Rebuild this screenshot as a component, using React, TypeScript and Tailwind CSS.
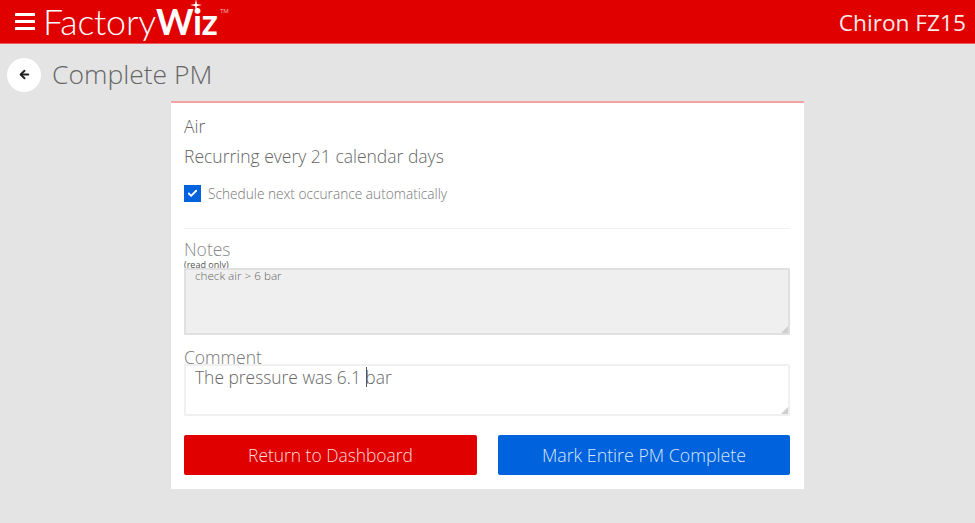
import { ArrowLeft, Check } from 'lucide-react';

const sans = "font-['Open_Sans','Liberation_Sans',sans-serif]";

function MenuIcon() {
  return (
    <svg width="20" height="17" viewBox="0 0 20 17" className="shrink-0">
      <rect x="0" y="0" width="20" height="3" rx="0.5" fill="#fff" />
      <rect x="0" y="7" width="20" height="3" rx="0.5" fill="#fff" />
      <rect x="0" y="14" width="20" height="3" rx="0.5" fill="#fff" />
    </svg>
  );
}

function ResizeGrip() {
  return (
    <svg width="7" height="7" viewBox="0 0 7 7" className="absolute right-[2px] bottom-[2px]">
      <path d="M7 0 L7 7 L0 7 Z" fill="#cfcfcf" />
    </svg>
  );
}

function Logo() {
  return (
    <div className="relative ml-[8px] flex h-[43px] items-center text-white">
      <span className="font-['Lato',sans-serif] text-[35.8px] leading-none font-light tracking-[-0.2px]">Factory</span>
      <span className="font-['Lato',sans-serif] text-[35.8px] leading-none font-bold tracking-[-0.6px]">Wiz</span>
      {/* sparkle over the i */}
      <svg width="12" height="12" viewBox="0 0 12 12" className="absolute -top-[1px] left-[147px]">
        <path d="M6 0 L7 5 L12 6 L7 7 L6 12 L5 7 L0 6 L5 5 Z" fill="#fff" />
      </svg>
      <span className="absolute top-[8px] left-[177px] text-[6px] leading-none opacity-70">TM</span>
    </div>
  );
}

export default function App() {
  return (
    <div className={`h-[523px] w-[975px] overflow-hidden bg-[#e4e4e4] ${sans}`}>
      <header className="flex h-[44px] items-center justify-between border-b border-[#ee5a5a] bg-[#e00000] pr-[9px] pl-[15px]">
        <div className="flex items-center">
          <MenuIcon />
          <Logo />
        </div>
        <div className="pt-[3px] text-[22.7px] leading-none text-[#fdeaea]">Chiron FZ15</div>
      </header>

      <div className="flex h-[57px] items-center pt-[4px] pl-[7px]">
        <button className="flex h-[34px] w-[34px] items-center justify-center rounded-full bg-white">
          <ArrowLeft size={13} strokeWidth={3.5} className="text-[#222]" />
        </button>
        <h1 className="ml-[11px] text-[26.5px] leading-none font-light text-[#666]">Complete PM</h1>
      </div>

      <main className="ml-[171px] h-[388px] w-[633px] border-t-2 border-[#f3a3a3] bg-white pt-[13px] pr-[14px] pl-[13px]">
        <div className="h-[20px] text-[17.5px] leading-[20px] font-light text-[#666]">Air</div>
        <div className="mt-[10px] h-[20px] text-[17.5px] leading-[20px] font-light text-[#666]">Recurring every 21 calendar days</div>

        <label className="mt-[19px] flex h-[17px] items-center">
          <span className="flex h-[17px] w-[17px] items-center justify-center bg-[#0062dd]">
            <Check size={11} strokeWidth={4} className="text-white" />
          </span>
          <span className="ml-[7px] text-[13.7px] leading-none font-light text-[#777]">Schedule next occurance automatically</span>
        </label>

        <div className="mt-[26px] border-t border-[#f0f0f0]" />

        <div className="mt-[11px] h-[18px] text-[17.5px] leading-[18px] font-light text-[#888]">Notes</div>
        <div className="mt-[2px] h-[9px] text-[9px] leading-[9px] text-[#555]">(read only)</div>
        <div className="relative -mt-px">
          <textarea
            readOnly
            value="check air > 6 bar"
            className="block h-[67px] w-[606px] resize-none rounded-[1px] border-2 border-[#e0e0e0] bg-[#efefef] py-0 pr-2 pl-[9px] text-[11.7px] leading-[11px] font-light text-[#666] outline-none"
          />
          <ResizeGrip />
        </div>

        <div className="mt-[14px] h-[16px] text-[17.5px] leading-[16px] font-light text-[#777]">Comment</div>
        <div className="relative -mt-px">
          <textarea
            readOnly
            value="The pressure was 6.1 bar"
            className="block h-[52px] w-[606px] resize-none rounded-[1px] border-2 border-[#f0f0f0] bg-white py-0 pr-2 pl-[9px] text-[17.4px] leading-[22px] font-light text-[#666] outline-none"
          />
          <ResizeGrip />
          {/* text caret */}
          <span className="absolute top-[3px] left-[182px] h-[20px] w-px bg-[#555]" />
        </div>

        <div className="mt-[19px] flex justify-between">
          <button className="h-[40px] w-[293px] rounded-[2px] bg-[#e00000] text-[17.4px] font-light text-[#fbdcdc]">Return to Dashboard</button>
          <button className="h-[40px] w-[292px] rounded-[2px] bg-[#0062dd] text-[17.8px] font-light text-[#d7e6fb]">Mark Entire PM Complete</button>
        </div>
      </main>
    </div>
  );
}
